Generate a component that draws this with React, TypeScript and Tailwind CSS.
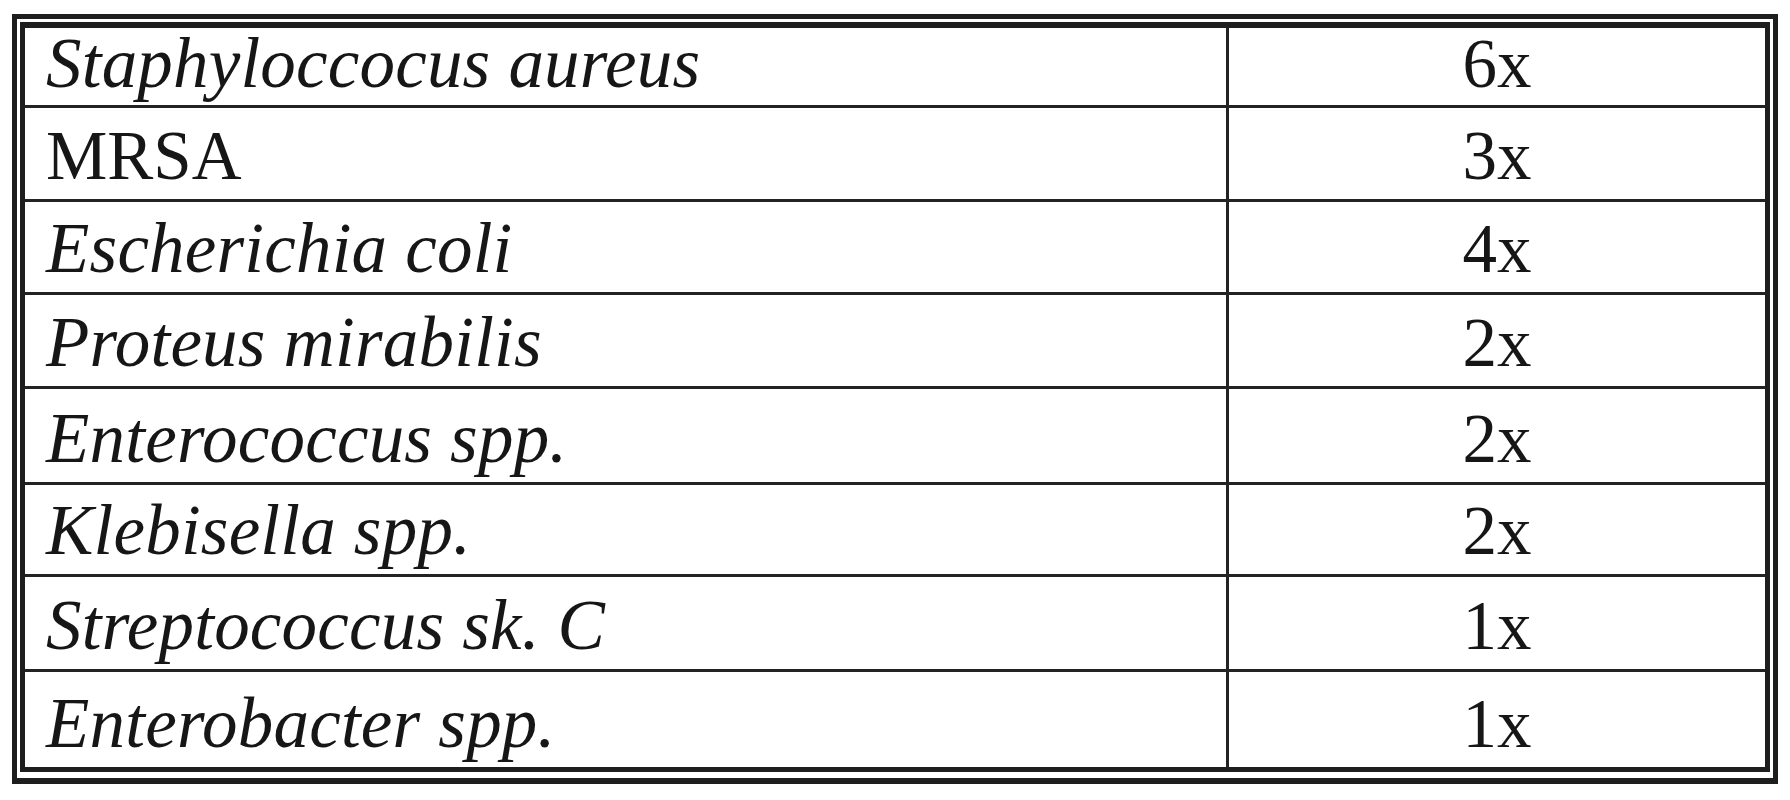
// App.tsx
import React from "react";

type Row = { name: string; italic: boolean; count: string; h: number };

const rows: Row[] = [
  { name: "Staphyloccocus aureus", italic: true, count: "6x", h: 80 },
  { name: "MRSA", italic: false, count: "3x", h: 94 },
  { name: "Escherichia coli", italic: true, count: "4x", h: 93 },
  { name: "Proteus mirabilis", italic: true, count: "2x", h: 94 },
  { name: "Enterococcus spp.", italic: true, count: "2x", h: 96 },
  { name: "Klebisella spp.", italic: true, count: "2x", h: 92 },
  { name: "Streptococcus sk. C", italic: true, count: "1x", h: 95 },
  { name: "Enterobacter spp.", italic: true, count: "1x", h: 95 },
];

export default function App() {
  return (
    <div className="w-[1790px] h-[800px] bg-white pt-[14px] pl-[12px] font-['Liberation_Serif','Times_New_Roman',serif] text-[#161616]">
      <div className="w-[1766px] border-[5px] border-b-[6px] border-[#1e1e1e] bg-white p-[3px] pb-[6px]">
        <div className="border-[5px] border-t-[6px] border-[#1e1e1e]">
          {rows.map((r, i) => (
            <div
              key={r.name}
              style={{ height: r.h }}
              className={
                "grid grid-cols-[1204px_1fr] " +
                (i < rows.length - 1 ? "border-b-[3px] border-[#232323]" : "")
              }
            >
              <div className="flex items-end pl-[21px] pb-[8px] border-r-[3px] border-[#232323]">
                <span
                  className={
                    r.italic
                      ? "text-[71px] leading-none italic tracking-[0.2px]"
                      : "text-[69px] leading-none"
                  }
                >
                  {r.name}
                </span>
              </div>
              <div className="flex items-end justify-center pb-[8px]">
                <span className="text-[69px] leading-none">{r.count}</span>
              </div>
            </div>
          ))}
        </div>
      </div>
    </div>
  );
}
